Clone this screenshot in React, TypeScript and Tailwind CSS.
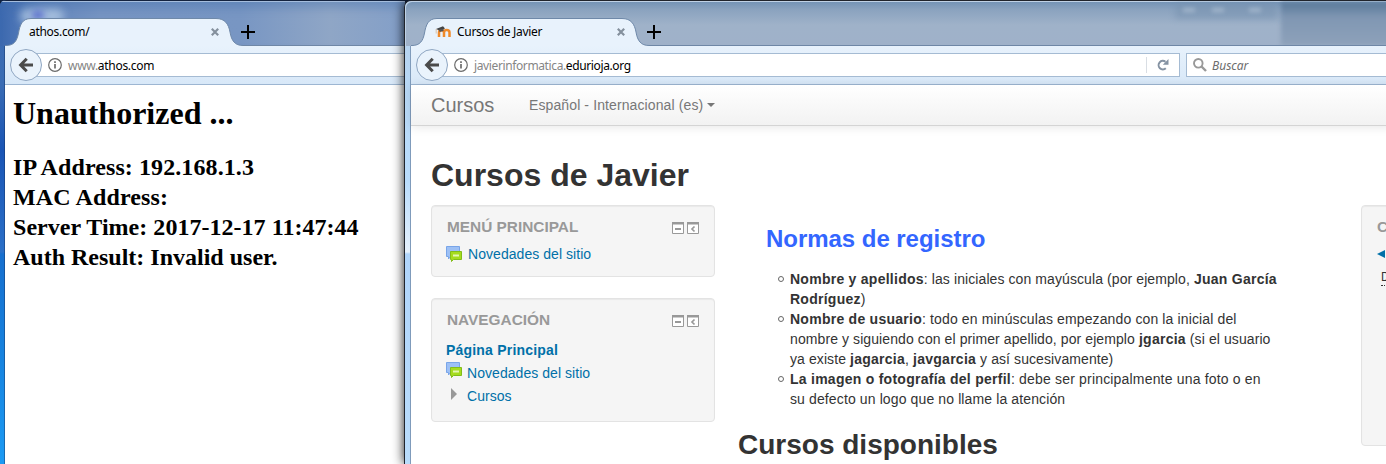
import type { ReactNode } from "react";

const UI = "font-['Noto_Sans',sans-serif]";

function TabStrip({ title, icon }: { title: string; icon?: ReactNode }) {
  return (
    <div className="relative flex h-7 shrink-0">
      <div className="relative h-7 w-[238px] shrink-0">
        <svg className="absolute left-0 top-0" width="238" height="28" viewBox="0 0 238 28">
          <path
            d="M0 27.5H1C9 27.5 12 23 13.5 15S17 .5 26 .5H211C220 .5 223.500 6 225 14C226.500 23 230 27.500 238 27.500V28H0Z"
            fill="#e8f2fc"
          />
          <path
            d="M0 27.5H1C9 27.5 12 23 13.5 15S17 .5 26 .5H211C220 .5 223.500 6 225 14C226.500 23 230 27.500 238 27.500"
            fill="none"
            stroke="#6f89a9"
          />
        </svg>
        <div className="relative flex h-7 items-center pl-6 pr-[24px]">
          {icon}
          <span className="grow whitespace-nowrap text-xs leading-4 tracking-[-0.3px] text-black">{title}</span>
          <svg width="8" height="8" viewBox="0 0 8 8" stroke="#84909d" strokeWidth="2.200">
            <path d="M.8 .8L7.200 7.200M7.200 .8L.8 7.200" />
          </svg>
        </div>
      </div>
      <div className="flex grow items-center border-b border-[#6f87a6]">
        <svg className="-ml-[2px]" width="14" height="14" viewBox="0 0 14 14" stroke="#000" strokeWidth="2">
          <path d="M7 0V14M0 7H14" />
        </svg>
      </div>
    </div>
  );
}

function BackButton() {
  return (
    <div className="relative z-10 ml-[5px] flex size-8 shrink-0 items-center justify-center rounded-full border border-[#8fa6c2] bg-[#eaf3fc]">
      <svg width="16" height="16" viewBox="0 0 16 16" fill="none" stroke="#4b4b4b" strokeWidth="3">
        <path d="M8.700 1.700L2.600 8L8.700 14.300M3 8H15" strokeLinejoin="miter" />
      </svg>
    </div>
  );
}

function InfoIcon() {
  return (
    <svg className="shrink-0" width="14" height="14" viewBox="0 0 14 14" fill="none">
      <circle cx="7" cy="7" r="6.300" stroke="#6b6b6b" strokeWidth="1.200" />
      <path d="M7 6V10.500M7 3.200V4.900" stroke="#6b6b6b" strokeWidth="1.700" />
    </svg>
  );
}

function MoodleIcon() {
  return (
    <svg className="mr-[6px] shrink-0" width="16" height="16" viewBox="0 0 16 16" fill="none">
      <path d="M4 13V8.500Q4 6.300 6.200 6.300Q9 6.300 9 8.500V13M9 8.500Q9 6 11.600 6Q14.500 6 14.500 8.500V13" stroke="#ef8a2b" strokeWidth="2.500" />
      <path d="M1 5L8 2.200L10 4.500L5 6.700Z" fill="#444" />
      <path d="M4 5.500L8.500 4.800V7L4.500 8Z" fill="#555" />
      <path d="M1.200 5V9.500" stroke="#d8b48e" strokeWidth=".8" />
    </svg>
  );
}

function BlockTools() {
  return (
    <div className="mt-[3px] flex gap-[3px]">
      <svg width="12" height="12" viewBox="0 0 12 12">
        <path d="M.5 .5H11.500V11.500H.5Z" fill="#fff" stroke="#999" />
        <path d="M0 0H12V2.500H0ZM3 6H9V8H3Z" fill="#999" />
      </svg>
      <svg width="12" height="12" viewBox="0 0 12 12">
        <path d="M.5 .5H11.500V11.500H.5Z" fill="#fff" stroke="#999" />
        <path d="M0 0H12V2.500H0Z" fill="#999" />
        <path d="M7.500 4.500L5 7L7.500 9.500" fill="none" stroke="#999" strokeWidth="1.700" />
      </svg>
    </div>
  );
}

function ForumIcon() {
  return (
    <svg className="shrink-0" width="16" height="16" viewBox="0 0 16 16">
      <path d="M.5 .5H13.500V10.500H4.500L2.500 13V10.500H.5Z" fill="#9dc0f5" stroke="#79a5e8" />
      <path d="M4.500 5.500H15.500V13.500H7.500L5.500 15.500V13.500H4.500Z" fill="#a5dc1e" stroke="#82bd19" />
      <path d="M7 8.500H13V10.500H7Z" fill="#e4f7b4" />
    </svg>
  );
}

function Block({ title, className, children }: { title: string; className: string; children: ReactNode }) {
  return (
    <section className={`w-[284px] rounded-[4px] border border-[#e3e3e3] bg-[#f5f5f5] px-[15px] pt-[13px] shadow-[inset_0_1px_1px_rgba(0,0,0,0.05)] ${className}`}>
      <div className="flex justify-between">
        <h2 className="text-[15.4px] font-bold leading-4 text-[#999]">{title}</h2>
        <BlockTools />
      </div>
      {children}
    </section>
  );
}

function AthosWindow() {
  return (
    <div className="absolute left-0 top-0 flex h-[464px] w-[405px] flex-col overflow-hidden rounded-tl-[6px] bg-[linear-gradient(180deg,#3c6bb0_0px,#3a6cb4_84px,#1a55b5_150px,#2b70c8_252px,#176fce_254px,#1784e0_360px,#1c9bf4_464px)]">
      <div className="absolute inset-x-0 top-0 h-[46px] border-t border-[#14233f] bg-[linear-gradient(90deg,#3c69b0_0px,#6285bd_40px,#7694c2_100px,#7896c3_240px,#8fa6c6_330px,#839fc8_405px)] shadow-[inset_0_1px_0_#a5bddd,inset_0_7px_8px_rgba(60,105,170,0.35)]" />
      <div className="absolute left-5 top-[9px] h-[14px] w-11 rounded-full bg-[#b6cde6] opacity-80 blur-[4px]" />
      <div className="absolute left-8 top-[11px] h-2 w-3 rounded-full bg-[#4c5ec9] opacity-80 blur-[3px]" />
      <div className="relative ml-[5px] mt-[18px] flex grow flex-col">
        <TabStrip title="athos.com/" />
        <div className="flex h-[39px] shrink-0 items-center border-b border-[#9db6d2] bg-linear-to-b from-[#e8f2fc] to-[#d8e8f8] shadow-[-1px_0_0_rgba(20,50,100,0.45)]">
          <BackButton />
          <div className="-ml-3 flex h-6 grow items-center gap-[6px] border-y border-[#a5bbd3] bg-white pl-[18px]">
            <InfoIcon />
            <span className="whitespace-nowrap pt-[2px] text-xs leading-4 tracking-[-0.3px]">
              <span className="text-[#858585]">www.</span>athos.com
            </span>
          </div>
        </div>
        <div className="grow bg-white px-2 pt-[10px] font-['Liberation_Serif',serif] font-bold text-black shadow-[-1px_0_0_rgba(20,50,100,0.45)]">
          <h1 className="text-[32px] leading-[37px]">Unauthorized ...</h1>
          <div className="mt-5 whitespace-nowrap text-2xl leading-[30px]">
            <p className="tracking-[0.09px]">IP Address: 192.168.1.3</p>
            <p className="tracking-[0.13px]">MAC Address:</p>
            <p className="tracking-[0.03px]">Server Time: 2017-12-17 11:47:44</p>
            <p>Auth Result: Invalid user.</p>
          </div>
        </div>
      </div>
    </div>
  );
}

function Rule({ children }: { children: ReactNode }) {
  return (
    <li className="flex">
      <span className="mr-[6px] mt-[7px] size-[6px] shrink-0 rounded-full border border-[#666]" />
      <span className="whitespace-nowrap tracking-[0.09px]">{children}</span>
    </li>
  );
}

function Strong({ children }: { children: ReactNode }) {
  return <b className="tracking-[0.26px]">{children}</b>;
}

function MoodlePage() {
  return (
    <div className="flex grow flex-col bg-white font-['Liberation_Sans',sans-serif] text-sm leading-5 text-[#333] shadow-[-1px_0_0_#7f9bbb]">
      <nav className="flex h-[41px] shrink-0 items-center border-b border-[#d4d4d4] bg-linear-to-b from-white to-[#f2f2f2] pl-5 text-[#777] shadow-[0_1px_10px_rgba(0,0,0,0.1)]">
        <span className="w-[98px] text-xl leading-5">Cursos</span>
        <span className="tracking-[0.11px]">Español - Internacional (es)</span>
        <span className="ml-1 border-x-4 border-t-4 border-x-transparent border-t-[#777]" />
      </nav>
      <h1 className="ml-5 mt-[29px] text-[32px] font-bold leading-10">Cursos de Javier</h1>
      <div className="ml-5 mt-[10px] flex items-start">
        <aside className="flex shrink-0 flex-col gap-[21px]">
          <Block title="MENÚ PRINCIPAL" className="h-[72px]">
            <a className="-ml-px mt-[9px] flex items-center gap-[6px] tracking-[0.05px] text-[#0070a8]">
              <ForumIcon />
              Novedades del sitio
            </a>
          </Block>
          <Block title="NAVEGACIÓN" className="h-[124px]">
            <div className="-ml-px mt-3 flex flex-col gap-[3px] text-[#0070a8]">
              <a className="font-bold tracking-[0.2px]">Página Principal</a>
              <a className="flex items-start gap-[5px] tracking-[0.05px]">
                <span className="-mt-px">
                  <ForumIcon />
                </span>
                Novedades del sitio
              </a>
              <a className="flex pl-[5px] tracking-[0.05px]">
                <span className="mr-[10px] mt-[2px] h-3 border-y-[6px] border-l-[6px] border-y-transparent border-l-[#999]" />
                Cursos
              </a>
            </div>
          </Block>
        </aside>
        <main className="ml-[23px] w-[623px] shrink-0 pt-[14px]">
          <h2 className="ml-7 text-2xl font-bold leading-10 tracking-[-0.04px] text-[#3366ff]">Normas de registro</h2>
          <ul className="ml-10 mt-[10px]">
            <Rule>
              <Strong>Nombre y apellidos</Strong>: las iniciales con mayúscula (por ejemplo, <Strong>Juan García</Strong>
              <br />
              <Strong>Rodríguez</Strong>)
            </Rule>
            <Rule>
              <Strong>Nombre de usuario</Strong>
              <span className="tracking-[0.13px]">: todo en minúsculas empezando con la inicial del</span>
              <br />
              nombre y siguiendo con el primer apellido, por ejemplo <Strong>jgarcia</Strong> (si el usuario
              <br />
              ya existe <Strong>jagarcia</Strong>, <Strong>javgarcia</Strong> y así sucesivamente)
            </Rule>
            <Rule>
              <Strong>La imagen o fotografía del perfil</Strong>
              <span className="tracking-[0.18px]">: debe ser principalmente una foto o en</span>
              <br />
              <span className="tracking-[0.12px]">su defecto un logo que no llame la atención</span>
            </Rule>
          </ul>
          <h2 className="mt-4 text-[28px] font-bold leading-10">Cursos disponibles</h2>
        </main>
        <aside className="h-[241px] w-[60px] shrink-0 overflow-hidden rounded-[4px] border border-[#e3e3e3] bg-[#f5f5f5] pl-[15px] pt-[13px] shadow-[inset_0_1px_1px_rgba(0,0,0,0.05)]">
          <h2 className="text-[15.4px] font-bold leading-4 text-[#999]">CALENDARIO</h2>
          <div className="mt-[15px] h-2 w-2 border-y-4 border-r-8 border-y-transparent border-r-[#0070a8]" />
          <abbr className="ml-1 mt-3 block w-8 border-b border-dotted border-[#333] text-[11.9px] leading-[15px] no-underline">Dom</abbr>
        </aside>
      </div>
    </div>
  );
}

function MoodleWindow() {
  return (
    <div className="absolute left-[404px] top-0 flex h-[464px] w-[990px] flex-col overflow-hidden rounded-tl-[7px] border-l border-t border-[#20242c] bg-[linear-gradient(180deg,#b5cfea_0px,#b9daf8_110px,#b9dcfc_180px,#e6f1fc_251px,#b0d5fb_253px,#b9dcfb_464px)] shadow-[0_0_12px_rgba(0,0,0,0.9)]">
      <div className="absolute inset-x-0 top-0 h-[45px] rounded-tl-[6px] bg-[linear-gradient(180deg,#7292b5_0px,#8ba3bf_9px,#9fb2c9_24px,#9fb1c9_45px)] shadow-[inset_1px_1px_0_#bfd1e5]" />
      <div className="absolute left-[876px] top-[1px] h-[44px] w-[120px] bg-linear-to-b from-[#587899] via-[#8097b3] via-35% to-[#8ea2ba] blur-[2px]" />
      <div className="absolute left-[770px] top-[2px] h-4 w-[102px] bg-[#7590ae] opacity-50 blur-[3px]" />
      <div className="absolute left-[778px] top-[7px] flex gap-[17px] opacity-50 blur-[2px]">
        <span className="h-1 w-3 bg-[#c5d3e2]" />
        <span className="h-1 w-3 bg-[#c5d3e2]" />
        <span className="ml-2 h-1 w-3 bg-[#c5d3e2]" />
      </div>
      <div className="relative ml-[6px] mt-[17px] flex grow flex-col">
        <TabStrip title="Cursos de Javier" icon={<MoodleIcon />} />
        <div className="flex h-[39px] shrink-0 items-center border-b border-[#9db6d2] bg-linear-to-b from-[#e8f2fc] to-[#d8e8f8] shadow-[-1px_0_0_#7f9bbb]">
          <BackButton />
          <div className="-ml-3 flex h-6 w-[744px] shrink-0 items-center gap-[6px] border border-[#a5bbd3] bg-white pl-[17px]">
            <InfoIcon />
            <span className="grow whitespace-nowrap pt-[2px] text-xs leading-4 tracking-[-0.38px]">
              <span className="text-[#858585]">javierinformatica.</span>edurioja.org
            </span>
            <span className="h-4 w-px bg-[#d9dee4]" />
            <svg className="ml-[4px] mr-[10px]" width="12" height="12" viewBox="0 0 12 12">
              <path d="M8.800 9.300A4.300 4.300 0 1 1 8.500 2.700" fill="none" stroke="#8593a3" strokeWidth="2" />
              <path d="M11.500 0V5.800H5.800Z" fill="#8593a3" />
            </svg>
          </div>
          <div className="ml-[6px] flex h-6 w-[230px] shrink-0 items-center gap-[5px] border border-[#a5bbd3] bg-white pl-[6px]">
            <svg width="14" height="14" viewBox="0 0 14 14" fill="none" stroke="#999">
              <circle cx="5.300" cy="5.300" r="4.300" strokeWidth="1.900" />
              <path d="M8.500 8.500L13 13" strokeWidth="2.400" />
            </svg>
            <span className="pt-[2px] text-xs italic leading-4 text-[#6d6d6d]">Buscar</span>
          </div>
        </div>
        <MoodlePage />
      </div>
    </div>
  );
}

export default function App() {
  return (
    <div className={`relative h-[464px] w-full overflow-hidden bg-[#10213f] text-black ${UI}`}>
      <AthosWindow />
      <MoodleWindow />
    </div>
  );
}
